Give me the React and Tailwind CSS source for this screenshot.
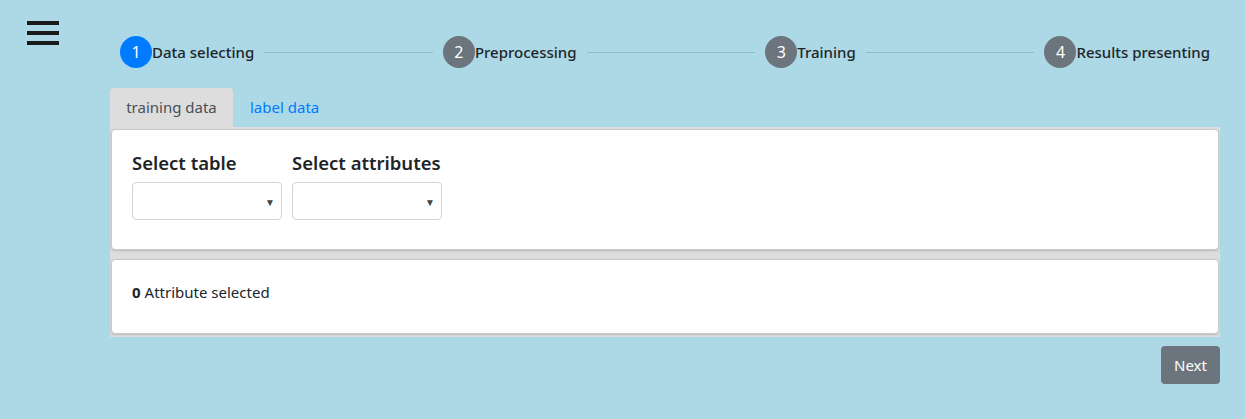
import React from "react";

const font = { fontFamily: '"Noto Sans", "Open Sans", sans-serif' };

function Step({ n, label, active }) {
  return (
    <div className="flex items-center">
      <div
        className={`w-8 h-8 rounded-full flex items-center justify-center text-white text-[16px] ${active ? "bg-[#007bff]" : "bg-[#6c757d]"}`}
      >
        {n}
      </div>
      <span className="text-[15px] font-medium text-[#212529] whitespace-nowrap leading-none">{label}</span>
    </div>
  );
}

function Line() {
  return <div className="flex-1 h-px bg-[#98b8c3] mx-[10px]" />;
}

function SelectBox() {
  return (
    <div className="relative w-[150px] h-[38px] bg-white border border-[#ced4da] rounded">
      <span className="absolute right-[6px] top-[12px] text-[10px] text-[#444]">▼</span>
    </div>
  );
}

export default function App() {
  return (
    <div className="w-[1245px] h-[419px] bg-[#add8e6] flex" style={font}>
      <div className="w-[110px] pt-[21px] pl-[27px] shrink-0">
        <div className="w-8 flex flex-col gap-[6px]">
          <div className="h-[4px] bg-[#1a1a1a]" />
          <div className="h-[4px] bg-[#1a1a1a]" />
          <div className="h-[4px] bg-[#1a1a1a]" />
        </div>
      </div>
      <div className="w-[1110px] flex flex-col">
        <div className="flex items-center pt-[36px] pl-[10px] pr-[10px]">
          <Step n="1" label="Data selecting" active />
          <Line />
          <Step n="2" label="Preprocessing" />
          <Line />
          <Step n="3" label="Training" />
          <Line />
          <Step n="4" label="Results presenting" />
        </div>
        <div className="flex mt-[20px] h-[39px] items-stretch">
          <div className="w-[123px] bg-[#dddddd] rounded-t flex items-center justify-center text-[15px] text-[#495057]">
            training data
          </div>
          <div className="pl-[17px] flex items-center text-[15px] text-[#007bff]">label data</div>
        </div>
        <div className="bg-[#dddddd] px-px pt-[2px] pb-[3px] flex flex-col gap-[9px]">
          <div className="bg-white h-[121px] rounded border border-[#c8c8c8] shadow-[0_1px_2px_rgba(0,0,0,0.15)] px-[20px] pt-[19px]">
            <div className="flex gap-[10px]">
              <div className="flex flex-col">
                <div className="text-[18.5px] font-semibold text-[#212529] leading-[28px] mb-[5px]">Select table</div>
                <SelectBox />
              </div>
              <div className="flex flex-col">
                <div className="text-[18.5px] font-semibold text-[#212529] leading-[28px] mb-[5px]">Select attributes</div>
                <SelectBox />
              </div>
            </div>
          </div>
          <div className="bg-white h-[75px] rounded border border-[#c8c8c8] shadow-[0_1px_2px_rgba(0,0,0,0.15)] px-[20px] pt-[21px] text-[15px] leading-[22px] text-[#212529]">
            <span className="font-bold mr-[4px]">0</span>Attribute selected
          </div>
        </div>
        <div className="flex justify-end mt-[9px]">
          <button className="w-[59px] h-[38px] bg-[#6c757d] text-white text-[15px] rounded">Next</button>
        </div>
      </div>
    </div>
  );
}
